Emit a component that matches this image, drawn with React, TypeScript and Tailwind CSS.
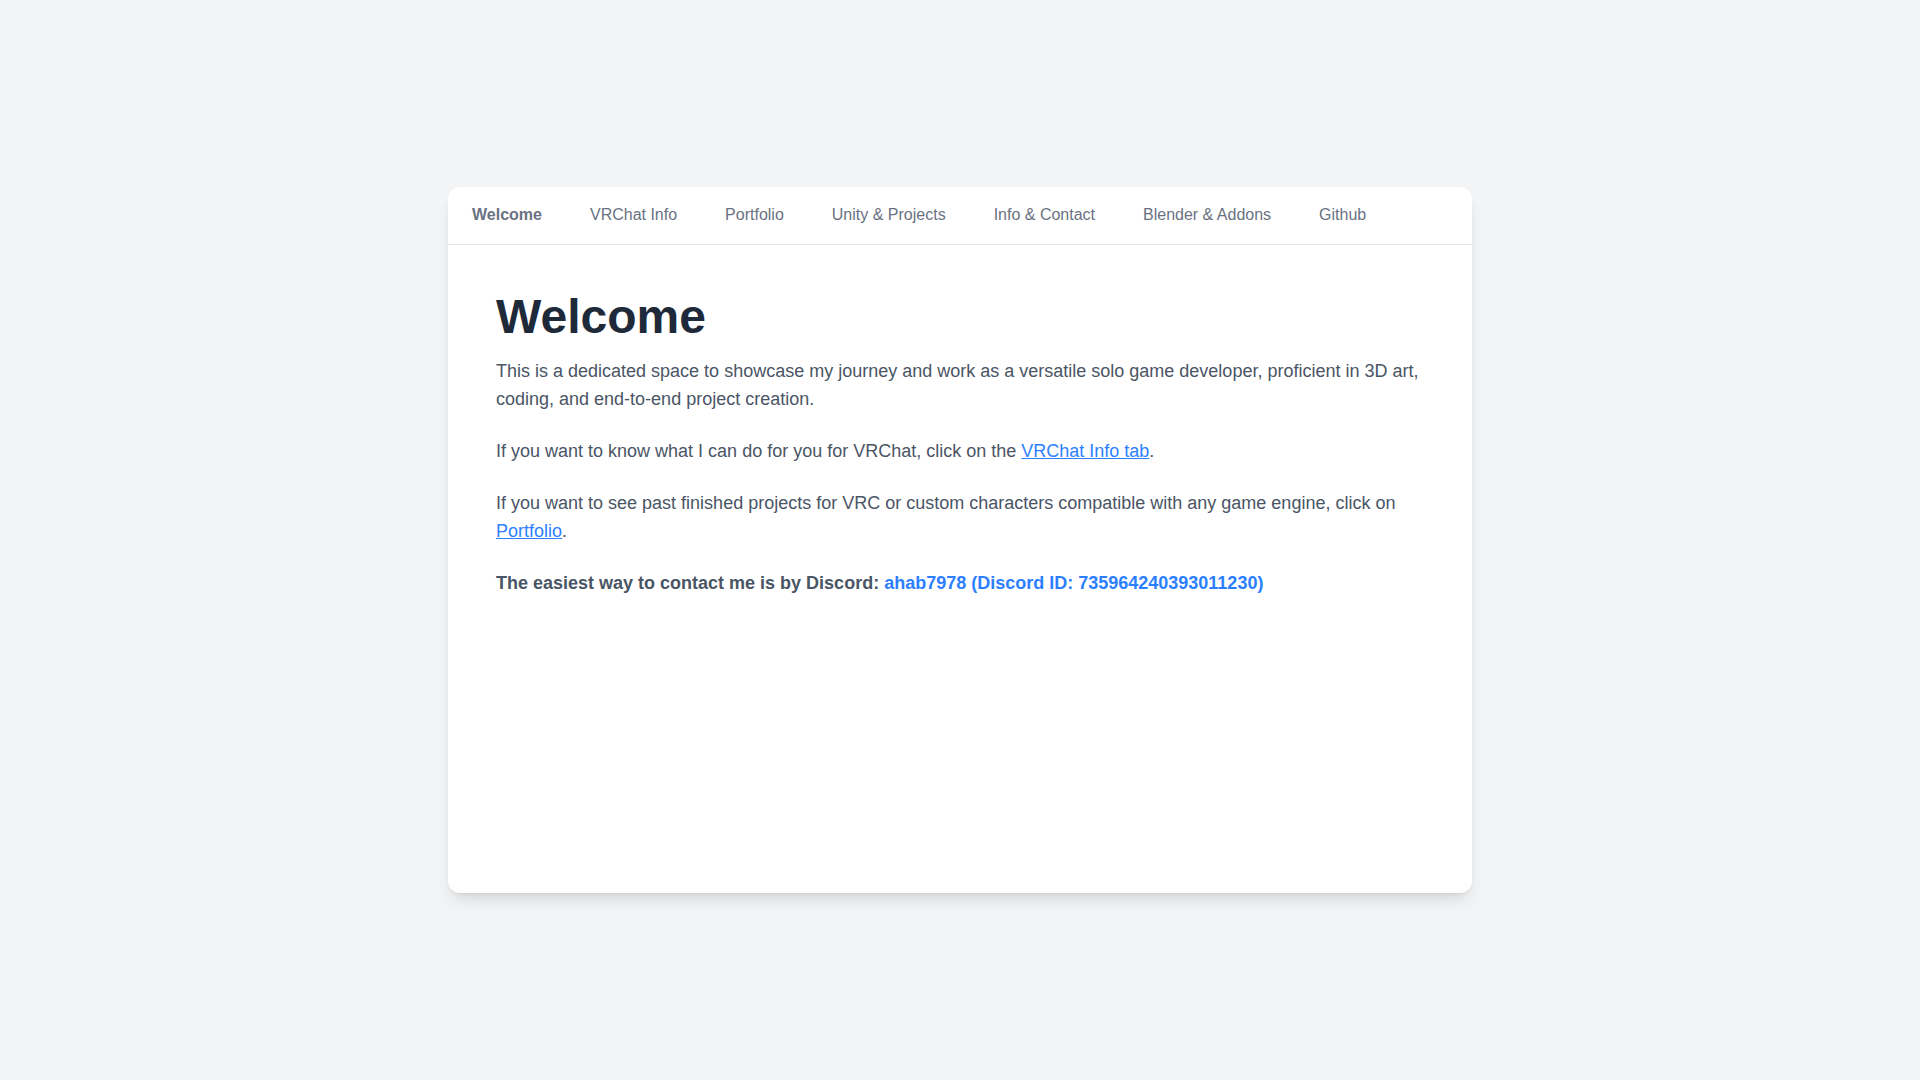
const tabs = [
  "Welcome",
  "VRChat Info",
  "Portfolio",
  "Unity & Projects",
  "Info & Contact",
  "Blender & Addons",
  "Github",
];

const App = () => {
  return (
    <div
      className="min-h-screen bg-gray-100 flex items-center justify-center"
      style={{ fontFamily: '"Liberation Sans", Arial, sans-serif' }}
    >
      <div className="w-full max-w-5xl h-[706px] bg-white rounded-xl shadow-lg flex flex-col overflow-hidden">
        <nav className="flex border-b border-gray-200">
          {tabs.map((tab, i) => (
            <button
              key={tab}
              className={
                i === 0
                  ? "px-6 pt-4 pb-[17px] text-base text-gray-500 font-bold"
                  : "px-6 pt-4 pb-[17px] text-base text-gray-500"
              }
            >
              {tab}
            </button>
          ))}
        </nav>

        <main className="p-12">
          <h1 className="text-5xl font-bold text-gray-800 mb-4">Welcome</h1>
          <div className="space-y-6 text-lg text-gray-600">
            <p>
              This is a dedicated space to showcase my journey and work as a versatile solo game developer, proficient in 3D art, coding, and end-to-end project creation.
            </p>
            <p>
              If you want to know what I can do for you for VRChat, click on the{" "}
              <a href="#" className="text-blue-500 underline">VRChat Info tab</a>.
            </p>
            <p>
              If you want to see past finished projects for VRC or custom characters compatible with any game engine, click on{" "}
              <a href="#" className="text-blue-500 underline">Portfolio</a>.
            </p>
            <p className="font-bold">
              The easiest way to contact me is by Discord:{" "}
              <span className="text-blue-500">ahab7978 (Discord ID: 735964240393011230)</span>
            </p>
          </div>
        </main>
      </div>
    </div>
  );
};

export default App;
